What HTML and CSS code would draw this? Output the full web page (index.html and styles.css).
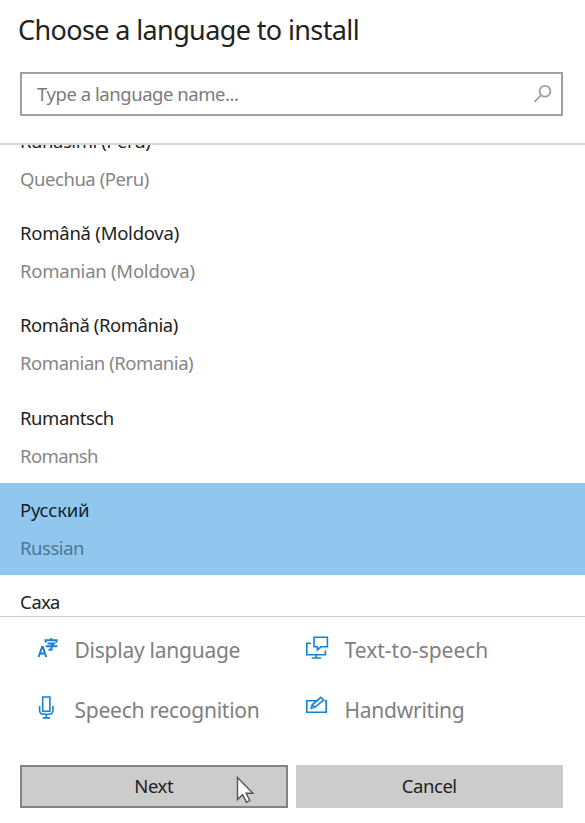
FILE: index.html
```html
<!DOCTYPE html>
<html lang="en">
<head>
<meta charset="utf-8">
<title>Choose a language to install</title>
<link rel="stylesheet" href="styles.css">
</head>
<body>
<main class="dialog">
  <header class="header">
    <h1 class="title">Choose a language to install</h1>
    <div class="search">
      <span class="placeholder">Type a language name...</span>
      <svg class="search-icon" width="20" height="20" viewBox="0 0 20 20"><circle cx="12" cy="7.3" r="5.4"/><path d="M8.1 11.2 1.4 17.9"/></svg>
    </div>
  </header>
  <ul class="list">
    <li class="row"><span class="native">Runasimi (Peru)</span><span class="english">Quechua (Peru)</span></li>
    <li class="row"><span class="native wide">Română (Moldova)</span><span class="english wide">Romanian (Moldova)</span></li>
    <li class="row"><span class="native">Română (România)</span><span class="english">Romanian (Romania)</span></li>
    <li class="row"><span class="native">Rumantsch</span><span class="english tight">Romansh</span></li>
    <li class="row selected"><span class="native wide">Русский</span><span class="english">Russian</span></li>
    <li class="row"><span class="native wide">Саха</span></li>
  </ul>
  <section class="features">
    <div class="feature">
      <svg class="icon" width="24" height="28" viewBox="0 0 24 28"><path class="bold" d="M2.6 21 6.1 11h.8L10.2 21M3.9 17.6h5.2"/><path class="bold" d="M9.6 6.6V4.2h11v2.4M15.2 2v2.2M11.5 7.4h6.4l-2.4 2.4v4h-3M9.6 10.3h11.8"/></svg>
      <span>Display language</span>
    </div>
    <div class="feature">
      <svg class="icon" width="24" height="28" viewBox="0 0 24 28"><path d="M5 7.2H.8v11.5h18.6v-4.2M8 1.2h13.4v9.6h-6.6l-3.4 3.2v-3.2H8zM10.2 18.7v3M5.6 22h9.6"/></svg>
      <span class="speech">Text-to-speech</span>
    </div>
    <div class="feature">
      <svg class="icon" width="24" height="28" viewBox="0 0 24 28"><path d="M6.7 1h7.2v14.2H6.7zM3.6 10v4.3q0 4 4 4h5.4q4 0 4-4V10M10.3 18.3v3.4M6.8 21.9h7.2"/></svg>
      <span>Speech recognition</span>
    </div>
    <div class="feature">
      <svg class="icon" width="24" height="28" viewBox="0 0 24 28"><path d="M12.5 4.7H.8v11.6h19.4V4.7h-1.6M5.2 12.4l1-3.6 8.6-7.4 2.7 2.6-8.6 7.4zM6.2 8.8l2.7 2.6"/></svg>
      <span>Handwriting</span>
    </div>
  </section>
  <footer class="actions">
    <button class="button focused" type="button">Next
      <svg class="cursor" width="20" height="30" viewBox="0 0 20 30"><path d="M1.5 1.5v22l5-4.8 4 7.5 3.3-1.7-3.7-7.2h6.8z"/></svg>
    </button>
    <button class="button" type="button">Cancel</button>
  </footer>
</main>
</body>
</html>
```
FILE: styles.css
```css
* {
  box-sizing: border-box;
}

body {
  margin: 0;
  background: #fff;
  font-family: "Noto Sans", "Open Sans", sans-serif;
  color: #222;
}

.dialog {
  display: flex;
  flex-direction: column;
  height: 823px;
  overflow: hidden;
}

.header {
  flex: none;
  height: 145px;
  padding: 10px 22px 0 20px;
  border-bottom: 2px solid #d6d6d6;
}

.title {
  margin: 0 0 22px -2px;
  font-size: 27px;
  font-weight: 400;
  line-height: 39px;
  padding-bottom: 1px;
  letter-spacing: -0.62px;
  white-space: nowrap;
}

.search {
  display: flex;
  align-items: center;
  justify-content: space-between;
  height: 44px;
  padding: 0 8px 0 15px;
  border: 2px solid #a0a0a0;
}

.placeholder {
  padding-bottom: 1px;
  font-size: 18.5px;
  line-height: 38px;
  letter-spacing: -0.45px;
  color: #7c7c7c;
}

.search-icon {
  fill: none;
  stroke: #a0a0a0;
  stroke-width: 1.8;
}

.list {
  flex: none;
  height: 472px;
  margin: 0;
  padding: 0;
  overflow: hidden;
  list-style: none;
  border-bottom: 1px solid #ccc;
}

.row {
  height: 92.3px;
  padding: 8px 20px;
}

.row:first-child {
  margin-top: -31.2px;
}

.native,
.english {
  display: block;
  font-size: 18.5px;
  line-height: 38px;
  letter-spacing: -0.45px;
  white-space: nowrap;
}

.english {
  color: #858585;
}

.native.wide,
.english.wide {
  letter-spacing: -0.24px;
}

.english.tight {
  letter-spacing: -0.6px;
}

.selected {
  background: #91c7ee;
}

.selected .native {
  color: #12232f;
}

.selected .english {
  color: #4d7595;
}

.features {
  flex: none;
  display: grid;
  grid-template-columns: 270px 1fr;
  grid-auto-rows: 60px;
  height: 148px;
  padding: 3px 0 0 36px;
}

.feature {
  display: flex;
  align-items: center;
  gap: 14.5px;
  font-size: 21px;
  letter-spacing: -0.25px;
  color: #808080;
  white-space: nowrap;
}

.speech {
  letter-spacing: 0;
}

.icon {
  flex: none;
  fill: none;
  stroke: #1a80d0;
  stroke-width: 1.6;
}

.bold {
  stroke-width: 2;
}

.actions {
  display: grid;
  grid-template-columns: 1fr 1fr;
  gap: 8px;
  height: 43px;
  padding: 0 22px 0 20px;
}

.button {
  position: relative;
  padding: 0 0 2px;
  border: 2px solid #ccc;
  background: #ccc;
  font: inherit;
  font-size: 18.5px;
  letter-spacing: -0.45px;
  color: #222;
}

.focused {
  border-color: #838383;
}

.cursor {
  position: absolute;
  top: 9px;
  left: 214px;
  fill: #fff;
  stroke: #555;
  stroke-width: 1.4;
}
```
